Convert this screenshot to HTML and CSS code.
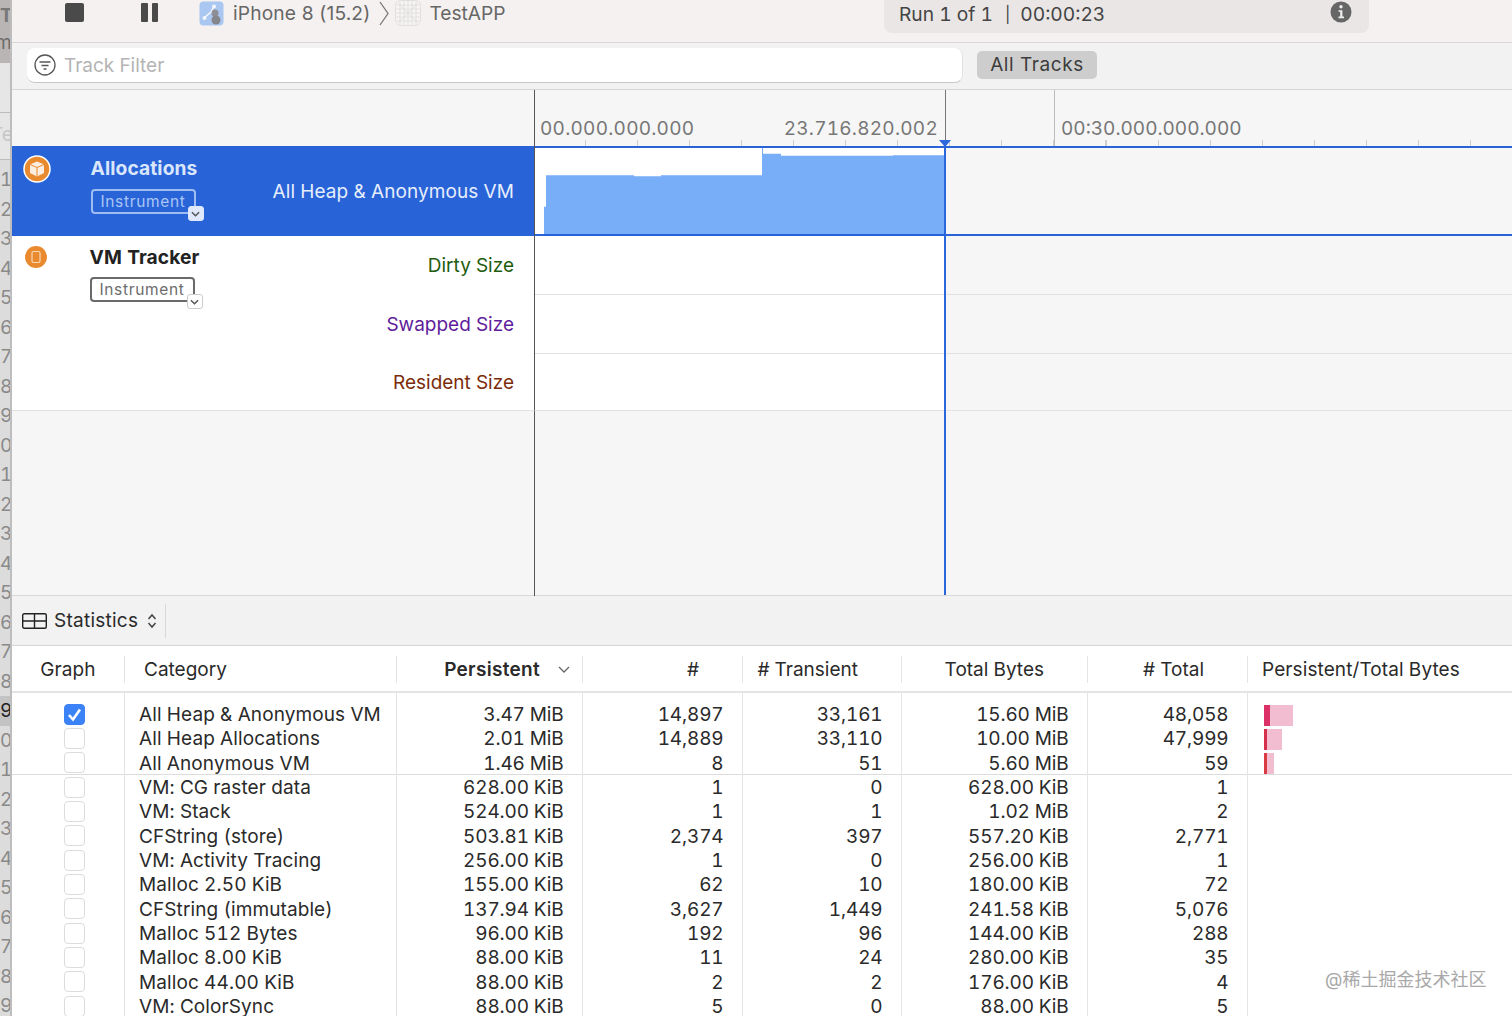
FILE: index.html
```html
<!doctype html>
<html>

<head>
	<meta charset="utf-8">
	<title>Instruments</title>
	<link rel="stylesheet" href="styles.css">
</head>

<body>
	<div class="window">
		<div class="gutter">
			<div class="gutter-top"><b>T</b><span>m</span></div>
			<div class="gutter-mid"><span>Te</span></div>
			<ol class="gutter-nums">
				<li>1</li><li>2</li><li>3</li><li>4</li><li>5</li><li>6</li><li>7</li><li>8</li><li>9</li>
				<li>0</li><li>1</li><li>2</li><li>3</li><li>4</li><li>5</li><li>6</li><li>7</li><li>8</li>
				<li class="gutter-on">9</li>
				<li>0</li><li>1</li><li>2</li><li>3</li><li>4</li><li>5</li><li>6</li><li>7</li><li>8</li><li>9</li>
			</ol>
		</div>

		<div class="main">
			<div class="toolbar">
				<span class="stop"></span>
				<span class="pause"><i></i><i></i></span>
				<svg class="ico-sim" viewBox="0 0 25 25">
					<rect x="0.5" y="0.5" width="24" height="24" rx="4" fill="#a9c7f0"/>
					<path d="M5 17L12 11L15 5M12 11L18 13" fill="none" stroke="#f2f6fc" stroke-width="1.6"/>
					<circle cx="15" cy="5.5" r="2" fill="#f2f6fc"/>
					<circle cx="5.5" cy="17" r="2" fill="#f2f6fc"/>
					<circle cx="16" cy="12" r="3.5" fill="#8e8f96"/>
					<circle cx="17" cy="19" r="4.5" fill="#85868c"/>
				</svg>
				<span class="crumb">iPhone 8 (15.2)</span>
				<svg class="ico-sep" viewBox="0 0 10 25"><path d="M1 1L9 12.5L1 24" fill="none" stroke="#777" stroke-width="1.3"/></svg>
				<svg class="ico-app" viewBox="0 0 26 26">
					<rect x="0.5" y="0.5" width="25" height="25" rx="5" fill="#f7f5f4" stroke="#e2e0df"/>
					<path d="M5 1V25M9 1V25M13 1V25M17 1V25M21 1V25M1 5H25M1 9H25M1 13H25M1 17H25M1 21H25M3 3L23 23M23 3L3 23" fill="none" stroke="#dedcdb" stroke-width="0.8"/>
				</svg>
				<span class="crumb crumb-app">TestAPP</span>
				<div class="run">
					<span class="run-text"><span>Run 1 of 1</span><span class="run-bar">|</span><span>00:00:23</span></span>
					<svg class="ico-info" viewBox="0 0 22 22">
						<circle cx="11" cy="11" r="10.5" fill="#666"/>
						<circle cx="11" cy="5.8" r="1.7" fill="#eee"/>
						<path d="M8.5 9.2H12.4V15.6H14V17.2H8.5V15.6H10.2V10.8H8.5Z" fill="#eee"/>
					</svg>
				</div>
			</div>

			<div class="filterbar">
				<div class="filter">
					<svg class="ico-filter" viewBox="0 0 22 22">
						<circle cx="11" cy="11" r="10" fill="none" stroke="#555" stroke-width="1.3"/>
						<path d="M5.5 8H16.5M7.5 11.5H14.5M9.5 15H12.5" fill="none" stroke="#555" stroke-width="1.5"/>
					</svg>
					<span>Track Filter</span>
				</div>
				<span class="all-tracks">All Tracks</span>
			</div>

			<div class="timeline">
				<div class="ruler">
					<div class="ruler-head"></div>
					<div class="ruler-scale">
						<div class="ruler-run"><span>00.000.000.000</span><span>23.716.820.002</span></div>
						<div class="ruler-gap"></div>
						<div class="ruler-rest"><span>00:30.000.000.000</span></div>
					</div>
				</div>

				<div class="track track-on">
					<div class="track-head">
						<svg class="ico-inst" viewBox="0 0 28 28">
							<circle cx="14" cy="14" r="13" fill="#ea8a2e" stroke="#fff" stroke-width="1.5"/>
							<path d="M14 6.5L21 9.5V18L14 21.5L7 18V9.5Z" fill="#fbeee0"/>
							<path d="M7 9.5L14 12.5L21 9.5M14 12.5V21.5" fill="none" stroke="#ea8a2e" stroke-width="1"/>
						</svg>
						<div class="inst">
							<div class="inst-name">Allocations</div>
							<div class="inst-btn">Instrument<span class="inst-more"><svg viewBox="0 0 10 6"><path d="M1 1L5 5L9 1" fill="none" stroke="#555" stroke-width="1.6"/></svg></span></div>
						</div>
						<div class="labels"><div class="lab lab-big">All Heap &amp; Anonymous VM</div></div>
					</div>
					<div class="track-body">
						<div class="chart">
							<svg viewBox="0 0 411 88" preserveAspectRatio="none">
								<path d="M10 88V60H12V28H100V29H127V28H228V0H229V6H247V8H359V7.5H411V88Z" fill="#78adf8"/>
							</svg>
						</div>
						<div class="after"></div>
					</div>
				</div>

				<div class="track">
					<div class="track-head track-head-vm">
						<svg class="ico-inst ico-inst-vm" viewBox="0 0 22 22">
							<circle cx="11" cy="11" r="11" fill="#ea8a2e"/>
							<rect x="7" y="5.5" width="8" height="11" rx="1.5" fill="none" stroke="#f9d9b8" stroke-width="1.2"/>
						</svg>
						<div class="inst">
							<div class="inst-name">VM Tracker</div>
							<div class="inst-btn">Instrument<span class="inst-more"><svg viewBox="0 0 10 6"><path d="M1 1L5 5L9 1" fill="none" stroke="#555" stroke-width="1.6"/></svg></span></div>
						</div>
						<div class="labels">
							<div class="lab lab-dirty">Dirty Size</div>
							<div class="lab lab-swap">Swapped Size</div>
							<div class="lab lab-res">Resident Size</div>
						</div>
					</div>
					<div class="track-body track-body-vm">
						<div class="chart"><p></p><p></p><p></p></div>
						<div class="after"><p></p><p></p><p></p></div>
					</div>
				</div>

				<div class="empty"><div class="ruler-head"></div></div>

				<div class="playhead"></div>
			</div>

			<div class="statsbar">
				<svg class="ico-table" viewBox="0 0 25 16">
					<rect x="0.7" y="0.7" width="23.6" height="14.6" rx="1.5" fill="none" stroke="#222" stroke-width="1.4"/>
					<path d="M0.7 8H24.3M12.5 0.7V15.3" fill="none" stroke="#222" stroke-width="1.4"/>
				</svg>
				<span>Statistics</span>
				<svg class="ico-updown" viewBox="0 0 10 16"><path d="M1.5 6L5 2L8.5 6M1.5 10L5 14L8.5 10" fill="none" stroke="#444" stroke-width="1.5"/></svg>
			</div>

			<div class="thead">
				<div class="th th-graph">Graph</div>
				<div class="th th-cat">Category</div>
				<div class="th th-num th-sort"><b>Persistent</b><svg viewBox="0 0 12 7"><path d="M1 1L6 6L11 1" fill="none" stroke="#666" stroke-width="1.3"/></svg></div>
				<div class="th th-num">#</div>
				<div class="th th-num"># Transient</div>
				<div class="th th-num">Total Bytes</div>
				<div class="th th-num"># Total</div>
				<div class="th th-cat th-last">Persistent/Total Bytes</div>
			</div>

			<div class="tbody">
				<div class="row row-first">
					<div class="c c-check"><span class="box box-on"><svg viewBox="0 0 21 21"><path d="M5 11L9 15.5L16 5.5" fill="none" stroke="#fff" stroke-width="2.6"/></svg></span></div>
					<div class="c c-name">All Heap &amp; Anonymous VM</div>
					<div class="c">3.47 MiB</div><div class="c">14,897</div><div class="c">33,161</div><div class="c">15.60 MiB</div><div class="c">48,058</div>
					<div class="c c-bar"><span class="bar" style="width:29px"><i style="width:6px;background:#dc3166"></i></span></div>
				</div>
				<div class="row">
					<div class="c c-check"><span class="box"></span></div>
					<div class="c c-name">All Heap Allocations</div>
					<div class="c">2.01 MiB</div><div class="c">14,889</div><div class="c">33,110</div><div class="c">10.00 MiB</div><div class="c">47,999</div>
					<div class="c c-bar"><span class="bar" style="width:18px"><i style="width:3px;background:#d62f4c"></i></span></div>
				</div>
				<div class="row row-line">
					<div class="c c-check"><span class="box"></span></div>
					<div class="c c-name">All Anonymous VM</div>
					<div class="c">1.46 MiB</div><div class="c">8</div><div class="c">51</div><div class="c">5.60 MiB</div><div class="c">59</div>
					<div class="c c-bar"><span class="bar" style="width:10px"><i style="width:3px;background:#d93a44"></i></span></div>
				</div>
				<div class="row">
					<div class="c c-check"><span class="box"></span></div>
					<div class="c c-name">VM: CG raster data</div>
					<div class="c">628.00 KiB</div><div class="c">1</div><div class="c">0</div><div class="c">628.00 KiB</div><div class="c">1</div><div class="c c-bar"></div>
				</div>
				<div class="row">
					<div class="c c-check"><span class="box"></span></div>
					<div class="c c-name">VM: Stack</div>
					<div class="c">524.00 KiB</div><div class="c">1</div><div class="c">1</div><div class="c">1.02 MiB</div><div class="c">2</div><div class="c c-bar"></div>
				</div>
				<div class="row">
					<div class="c c-check"><span class="box"></span></div>
					<div class="c c-name">CFString (store)</div>
					<div class="c">503.81 KiB</div><div class="c">2,374</div><div class="c">397</div><div class="c">557.20 KiB</div><div class="c">2,771</div><div class="c c-bar"></div>
				</div>
				<div class="row">
					<div class="c c-check"><span class="box"></span></div>
					<div class="c c-name">VM: Activity Tracing</div>
					<div class="c">256.00 KiB</div><div class="c">1</div><div class="c">0</div><div class="c">256.00 KiB</div><div class="c">1</div><div class="c c-bar"></div>
				</div>
				<div class="row">
					<div class="c c-check"><span class="box"></span></div>
					<div class="c c-name">Malloc 2.50 KiB</div>
					<div class="c">155.00 KiB</div><div class="c">62</div><div class="c">10</div><div class="c">180.00 KiB</div><div class="c">72</div><div class="c c-bar"></div>
				</div>
				<div class="row">
					<div class="c c-check"><span class="box"></span></div>
					<div class="c c-name">CFString (immutable)</div>
					<div class="c">137.94 KiB</div><div class="c">3,627</div><div class="c">1,449</div><div class="c">241.58 KiB</div><div class="c">5,076</div><div class="c c-bar"></div>
				</div>
				<div class="row">
					<div class="c c-check"><span class="box"></span></div>
					<div class="c c-name">Malloc 512 Bytes</div>
					<div class="c">96.00 KiB</div><div class="c">192</div><div class="c">96</div><div class="c">144.00 KiB</div><div class="c">288</div><div class="c c-bar"></div>
				</div>
				<div class="row">
					<div class="c c-check"><span class="box"></span></div>
					<div class="c c-name">Malloc 8.00 KiB</div>
					<div class="c">88.00 KiB</div><div class="c">11</div><div class="c">24</div><div class="c">280.00 KiB</div><div class="c">35</div><div class="c c-bar"></div>
				</div>
				<div class="row">
					<div class="c c-check"><span class="box"></span></div>
					<div class="c c-name">Malloc 44.00 KiB</div>
					<div class="c">88.00 KiB</div><div class="c">2</div><div class="c">2</div><div class="c">176.00 KiB</div><div class="c">4</div><div class="c c-bar"></div>
				</div>
				<div class="row">
					<div class="c c-check"><span class="box"></span></div>
					<div class="c c-name">VM: ColorSync</div>
					<div class="c">88.00 KiB</div><div class="c">5</div><div class="c">0</div><div class="c">88.00 KiB</div><div class="c">5</div><div class="c c-bar"></div>
				</div>
			</div>
		</div>
	</div>
	<div class="mark">@稀土掘金技术社区</div>
</body>

</html>
```

FILE: styles.css
```css
* {
	margin: 0;
	padding: 0;
	box-sizing: border-box;
	list-style: none;
}

html,
body {
	height: 100%;
	overflow: hidden;
}

body {
	font-family: Inter, "Noto Sans CJK SC", sans-serif;
	font-size: 19px;
	font-variant-numeric: tabular-nums;
	color: #2a2a2a;
	background: #fff;
	position: relative;
}

svg {
	display: block;
	flex: none;
}

.window {
	display: flex;
	height: 1016px;
	overflow: hidden;
}

/* gutter: the window behind, cut off at the left edge */
.gutter {
	width: 12px;
	flex: none;
	overflow: hidden;
	background: #dcdcdc;
	border-right: 2px solid #bdbdbd;
	color: #8a8a8a;
	font-size: 19px;
}

.gutter-top {
	height: 63px;
	background: #b9b5b4;
	color: #777;
	padding-top: 4px;
	line-height: 24px;
}

.gutter-top b,
.gutter-top span {
	display: block;
}

.gutter-top span {
	color: #6d6d6d;
	margin: 3px 0 0 -5px;
}

.gutter-mid {
	height: 102px;
	padding-top: 60px;
	color: #c6c6c6;
	background: linear-gradient(#e6e6e6 49px, #bbb 49px, #bbb 50px, #e6e6e6 50px, #e6e6e6 96px, #bbb 96px, #bbb 97px, #dcdcdc 97px);
	line-height: 24px;
	white-space: nowrap;
}

.gutter-mid span {
	display: block;
	margin-left: -9px;
}

.gutter-nums li {
	height: 29.5px;
	line-height: 29.5px;
	width: 12px;
	overflow: hidden;
}

.gutter-on {
	color: #222;
	background: #c3c3c3;
}

.main {
	flex: 1;
	min-width: 0;
}

/* toolbar */
.toolbar {
	height: 43px;
	background: #f5f1f0;
	border-bottom: 1px solid #d9d9d9;
	display: flex;
	align-items: flex-start;
	color: #666;
	font-size: 19.2px;
}

.stop {
	width: 19px;
	height: 19px;
	margin: 3px 0 0 53px;
	border-radius: 2px;
	background: #4b4a4a;
}

.pause {
	display: flex;
	gap: 4px;
	margin: 3px 0 0 57px;
}

.pause i {
	width: 6.5px;
	height: 19px;
	border-radius: 1px;
	background: #4b4a4a;
}

.ico-sim {
	width: 25px;
	height: 25px;
	margin: 1px 0 0 41px;
}

.crumb {
	font-variant-numeric: proportional-nums;
	letter-spacing: 0.15px;
	line-height: 27px;
	margin-left: 9px;
	white-space: nowrap;
}

.ico-sep {
	width: 10px;
	height: 25px;
	margin: 1px 0 0 9px;
}

.ico-app {
	width: 26px;
	height: 26px;
	margin: 0 0 0 6px;
}

.crumb-app {
	margin-left: 8px;
	letter-spacing: 0;
}

.run {
	width: 485px;
	height: 33px;
	margin-left: auto;
	margin-right: 143px;
	padding: 1px 18px 0 15px;
	border-radius: 0 0 8px 8px;
	background: #e9e6e5;
	color: #444;
	display: flex;
	justify-content: space-between;
	line-height: 27px;
}

.run-text {
	display: flex;
	white-space: nowrap;
}

.run-bar {
	font-size: 16px;
	margin: 0 10px 0 12px;
}

.ico-info {
	width: 22px;
	height: 22px;
	margin-right: -1px;
}

/* track filter */
.filterbar {
	height: 47px;
	padding: 5px 0 0 15px;
	display: flex;
	align-items: flex-start;
	background: #f2f2f2;
	border-bottom: 1px solid #d5d5d5;
}

.filter {
	width: 936px;
	height: 35px;
	padding-left: 7px;
	display: flex;
	align-items: center;
	gap: 8px;
	background: #fff;
	border-radius: 8px;
	border-bottom: 1px solid #c8c8c8;
	border-right: 1px solid #e2e2e2;
	color: #b4b4b4;
}

.ico-filter {
	width: 22px;
	height: 22px;
}

.all-tracks {
	margin: 3px 0 0 14px;
	width: 120px;
	height: 28px;
	line-height: 28px;
	text-align: center;
	border-radius: 5px;
	background: #cdcdcd;
	color: #3d3d3d;
	letter-spacing: 0.6px;
}

/* timeline */
.timeline {
	position: relative;
	height: 506px;
	background: #f6f6f6;
	border-bottom: 1px solid #d8d8d8;
}

.ruler {
	height: 56px;
	display: flex;
}

.ruler-head {
	width: 523px;
	flex: none;
	border-right: 1.5px solid #555;
}

.ruler-scale {
	flex: 1;
	display: flex;
	color: #777;
	font-size: 19px;
	line-height: 24px;
	background: repeating-linear-gradient(90deg, transparent 0, transparent 50px, #cfcfcf 50px, #cfcfcf 51.05px, transparent 51.05px, transparent 52.05px) 0 100% / 100% 6px no-repeat;
}

.ruler-run {
	width: 411px;
	padding: 27px 7px 0 5px;
	display: flex;
	justify-content: space-between;
	border-right: 1px solid #777;
	letter-spacing: 0.25px;
}

.ruler-gap {
	width: 109px;
	border-right: 1px solid #bdbdbd;
}

.ruler-rest {
	padding: 27px 0 0 6px;
	white-space: nowrap;
}

.track {
	display: flex;
	background: #fff;
}

.track-head {
	width: 523px;
	flex: none;
	height: 90px;
	padding: 9px 20px 0 11px;
	display: flex;
	border-right: 1.5px solid #555;
}

.track-on .track-head {
	background: #2963d8;
	color: #fff;
}

.ico-inst {
	width: 28px;
	height: 28px;
}

.ico-inst-vm {
	width: 22px;
	height: 22px;
	margin: 2px 3px 0 2px;
}

.inst {
	margin-left: 39.5px;
	width: 116px;
}

.inst-name {
	font-weight: 700;
	font-size: 19.2px;
	line-height: 27px;
	color: #222;
	letter-spacing: 0.1px;
}

.inst-name + .inst-btn {
	margin-top: 7px;
}

.track-on .inst-name {
	color: #d9e6fb;
}

.inst-btn {
	position: relative;
	width: 105px;
	height: 25px;
	border: 2px solid #6a6a6a;
	border-radius: 4px;
	padding-left: 8px;
	font-size: 15.5px;
	line-height: 21px;
	letter-spacing: 0.65px;
	color: #6d6d6d;
	white-space: nowrap;
}

.track-on .inst-btn {
	border-color: #9dbdf3;
	color: #a9c6f5;
}

.inst-more {
	position: absolute;
	right: -10px;
	bottom: -9px;
	width: 16px;
	height: 15px;
	border-radius: 3px;
	background: #fff;
	border: 1px solid #ccc;
	display: flex;
	align-items: center;
	justify-content: center;
}

.track-on .inst-more {
	background: #dfe9fb;
	border-color: #dfe9fb;
}

.inst-more svg {
	width: 9px;
	height: 6px;
}

.labels {
	flex: 1;
	text-align: right;
	white-space: nowrap;
}

.lab {
	font-size: 19px;
}

.lab-big {
	color: #e6eefc;
	line-height: 27px;
	margin-top: 23px;
	letter-spacing: 0.08px;
}

.lab-dirty,
.lab-swap,
.lab-res {
	height: 59px;
	line-height: 27px;
}

.lab-dirty {
	color: #1f5c0c;
	margin-top: 8px;
}

.lab-swap {
	color: #5f1c9b;
}

.lab-res {
	color: #7a2c0a;
	margin-top: -1px;
}

.track-head-vm {
	height: 175px;
	padding-top: 8px;
	border-bottom: 1px solid #e2e2e2;
}

.track-head-vm .inst-btn {
	background: #fff;
	margin-top: 6px;
}

.track-body {
	flex: 1;
	display: flex;
	height: 90px;
	border-top: 2px solid #2963d8;
	border-bottom: 2px solid #2963d8;
}

.chart {
	width: 410px;
	background: #fff;
}

.chart svg {
	width: 411px;
	height: 86px;
	margin-left: -1px;
}

.after {
	flex: 1;
	background: #f6f6f6;
}

.track-body-vm {
	height: 175px;
	border: 0;
}

.track-body-vm p {
	height: 59px;
	border-bottom: 1px solid #e2e2e2;
}

.track-body-vm p:last-child {
	height: 57px;
}

.empty {
	height: 185px;
}

.empty .ruler-head {
	height: 100%;
}

.playhead {
	position: absolute;
	left: 932px;
	top: 50px;
	bottom: 0;
	width: 2px;
	background: #2a66dc;
}

.playhead::before {
	content: "";
	position: absolute;
	left: -5.5px;
	top: 0;
	border-left: 6.5px solid transparent;
	border-right: 6.5px solid transparent;
	border-top: 7px solid #2a66dc;
}

/* statistics */
.statsbar {
	height: 50px;
	padding-left: 10px;
	display: flex;
	align-items: center;
	background: #f2f2f2;
	border-bottom: 1px solid #d5d5d5;
	letter-spacing: 0.25px;
}

.statsbar span {
	margin-left: 7px;
}

.ico-table {
	width: 25px;
	height: 16px;
}

.ico-updown {
	width: 10px;
	height: 16px;
	margin: 0 8px 0 8.5px;
}

.statsbar::after {
	content: "";
	width: 1px;
	height: 34px;
	background: #d8d8d8;
}

/* table */
.thead,
.row {
	display: grid;
	grid-template-columns: 112px 272px 186px 160px 159px 186px 160px 1fr;
}

.thead {
	height: 47px;
	padding-top: 10px;
	border-bottom: 2px solid #e4e4e4;
	line-height: 27px;
}

.th {
	height: 27px;
	border-left: 1px solid #e4e4e4;
	white-space: nowrap;
}

.th-graph {
	border-left: 0;
	text-align: center;
	letter-spacing: 0.1px;
}

.th-cat {
	padding-left: 19px;
}

.th-last {
	padding-left: 14px;
	letter-spacing: 0.1px;
}

.th-num {
	text-align: right;
	padding-right: 43px;
}

.th-sort {
	display: flex;
	justify-content: flex-end;
	align-items: center;
}

.th-sort b {
	font-weight: 600;
	letter-spacing: 0.3px;
}

.th-sort svg {
	width: 12px;
	height: 7px;
	margin: 0 -31px 0 18px;
}

.tbody {
	line-height: 24.33px;
}

.row {
	height: 24.33px;
}

.row-first {
	height: 34.33px;
}

.row-first .c {
	padding-top: 10px;
}

.row-line {
	background: linear-gradient(#dcdcdc, #dcdcdc) 0 calc(100% - 1px) / 100% 1px no-repeat;
}

.c {
	border-left: 1px solid #e4e4e4;
	text-align: right;
	padding-right: 18.5px;
	white-space: nowrap;
	letter-spacing: -0.15px;
}

.c-check {
	border-left: 0;
	text-align: left;
	padding: 0 0 0 52px;
	display: flex;
	align-items: center;
}

.c-name {
	text-align: left;
	padding-left: 14px;
	letter-spacing: 0.1px;
}

.c-bar {
	text-align: left;
	padding: 0 0 0 16px;
}

.box {
	width: 21px;
	height: 21px;
	margin-top: -2px;
	border-radius: 4px;
	background: #fff;
	border: 1px solid #dcdcdc;
}

.box-on {
	background: #3b82f6;
	border-color: #3b82f6;
}

.box-on svg {
	margin: -1px;
	width: 21px;
	height: 21px;
}

.bar {
	display: block;
	height: 21px;
	margin-top: 1.5px;
	background: #f2bdd0;
}

.bar i {
	display: block;
	height: 21px;
}

.mark {
	position: absolute;
	left: 1325px;
	top: 968px;
	font-size: 18px;
	line-height: 24px;
	color: #a8a8a8;
	white-space: nowrap;
}
```
